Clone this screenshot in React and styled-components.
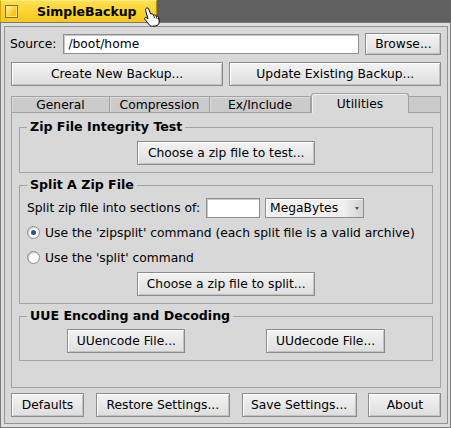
import styled, { createGlobalStyle } from 'styled-components'

const Global = createGlobalStyle`
  html, body {
    margin: 0;
    padding: 0;
    background: #606060;
  }
  * { box-sizing: border-box; }
`

const Desktop = styled.div`
  width: 451px;
  height: 428px;
  display: flex;
  flex-direction: column;
  font-family: "DejaVu Sans", "Liberation Sans", sans-serif;
  font-size: 12.3px;
  color: #000;
`

const TitleTab = styled.div`
  position: relative;
  width: 157px;
  height: 22px;
  flex: 0 0 22px;
  display: flex;
  align-items: center;
  background: linear-gradient(#ffe04e, #f7c71a);
  border-top: 1px solid #ffeb8a;
  border-right: 1px solid #b58d00;
  border-left: 1px solid #d9a800;
`

const CloseBox = styled.div`
  width: 13px;
  height: 13px;
  margin-left: 4px;
  border: 1px solid #8f7000;
  background: linear-gradient(135deg, #fff4b8, #f4c516 70%);
  box-shadow: inset -1px -1px 0 #ffe780;
`

const Title = styled.span`
  margin-left: 19px;
  font-weight: bold;
  font-size: 12.5px;
`

const Cursor = styled.svg`
  position: absolute;
  left: 142px;
  top: 6px;
`

const Frame = styled.div`
  flex: 1;
  display: flex;
  border: 1px solid #7a7a7a;
  padding: 3px;
  background: #dedede;
`

const Content = styled.div`
  flex: 1;
  display: flex;
  flex-direction: column;
  border: 1px solid #939393;
  background: #d8d8d8;
  padding: 6px 6px 6px 6px;
`

const Row = styled.div`
  display: flex;
  align-items: center;
  gap: ${p => p.$gap ?? 6}px;
  margin-bottom: ${p => p.$mb ?? 0}px;
  justify-content: ${p => p.$justify || 'flex-start'};
`

const Label = styled.span`
  white-space: nowrap;
`

const TextField = styled.div`
  height: 20px;
  width: ${p => p.$w}px;
  background: #fff;
  border: 1px solid #8e8e8e;
  box-shadow: inset 1px 1px 0 #c8c8c8;
  display: flex;
  align-items: center;
  padding-left: 4px;
`

const Button = styled.button`
  height: ${p => p.$h || 24}px;
  width: ${p => (p.$w ? `${p.$w}px` : 'auto')};
  flex: ${p => (p.$grow ? 1 : '0 0 auto')};
  padding: 0;
  font-family: inherit;
  font-size: 12.3px;
  color: #000;
  background: linear-gradient(#f3f3f3, #dedede);
  border: 1px solid #8c8c8c;
  border-radius: 0;
  box-shadow: inset 1px 1px 0 #ffffff, inset -1px -1px 0 #c2c2c2;
`

const Tabs = styled.div`
  flex: 1;
  display: flex;
  flex-direction: column;
  margin: 7px 0 5px;
`

const TabStrip = styled.div`
  display: flex;
  align-items: flex-end;
  height: 20px;
`

const Tab = styled.div`
  flex: 0 0 ${p => p.$w}px;
  height: ${p => (p.$active ? 20 : 17)}px;
  display: flex;
  align-items: center;
  justify-content: center;
  background: ${p => (p.$active ? '#d8d8d8' : '#cbcbcb')};
  border: 1px solid #a2a2a2;
  border-left: ${p => (p.$first || p.$active ? '1px solid #a2a2a2' : 'none')};
  border-bottom: ${p => (p.$active ? 'none' : '1px solid #a2a2a2')};
  border-radius: ${p => (p.$active ? '3px 3px 0 0' : '0')};
  box-shadow: ${p => (p.$active ? 'inset 1px 1px 0 #f0f0f0' : 'inset 1px 1px 0 #dcdcdc')};
  padding-top: ${p => (p.$active ? 0 : 1)}px;
`

const TabFiller = styled.div`
  flex: 1;
  height: 17px;
  background: #cbcbcb;
  border: 1px solid #a2a2a2;
  border-left: none;
`

const Panel = styled.div`
  flex: 1;
  display: flex;
  flex-direction: column;
  gap: 5px;
  border: 1px solid #a2a2a2;
  border-top: none;
  padding: 7px 7px;
`

const Group = styled.fieldset`
  margin: 0;
  border: 1px solid #a4a4a4;
  padding: ${p => p.$pt ?? 6}px 7px 7px;
  display: flex;
  flex-direction: column;
  gap: 4px;
  min-width: 0;
`

const Legend = styled.legend`
  font-weight: bold;
  font-size: 12.6px;
  line-height: 14px;
  padding: 0 3px;
`

const Select = styled.div`
  width: 99px;
  height: 20px;
  display: flex;
  align-items: center;
  justify-content: space-between;
  padding-left: 4px;
  border: 1px solid #8c8c8c;
  background: linear-gradient(90deg, #f0f0f0 80%, #d2d2d2);
  box-shadow: inset 1px 1px 0 #fff;
`

const Arrow = styled.span`
  width: 0;
  height: 0;
  margin-right: 4px;
  border-left: 2.5px solid transparent;
  border-right: 2.5px solid transparent;
  border-top: 3px solid #555;
`

const RadioRow = styled.label`
  display: flex;
  align-items: center;
  gap: 5px;
  height: 21px;
`

const RadioDot = styled.span`
  width: 13px;
  height: 13px;
  border-radius: 50%;
  border: 1px solid #8a8a8a;
  background: #fff;
  box-shadow: inset 1px 1px 1px #c8c8c8;
  display: flex;
  align-items: center;
  justify-content: center;
  &::after {
    content: '';
    width: 5px;
    height: 5px;
    border-radius: 50%;
    background: ${p => (p.$on ? '#24528c' : 'transparent')};
  }
`

const Center = styled.div`
  display: flex;
  justify-content: ${p => p.$justify || 'center'};
`

const tabs = [
  { name: 'General', w: 99 },
  { name: 'Compression', w: 100 },
  { name: 'Ex/Include', w: 101 },
  { name: 'Utilities', w: 98, active: true },
]

const App = () => {
  return (
    <Desktop>
      <Global />
      <TitleTab>
        <CloseBox />
        <Title>SimpleBackup</Title>
        <Cursor width="18" height="20" viewBox="0 0 18 20">
          <path
            d="M3 1.5 C3.8 0.6 5.2 0.8 5.6 1.8 L7.8 7.2 C8.5 6.4 9.8 6.6 10.2 7.6 L10.5 8.2 C11.3 7.5 12.5 7.8 12.9 8.8 L13.2 9.4 C14 8.9 15.2 9.3 15.5 10.4 L16.2 14 C16.6 16.8 15 18.8 12.2 19 L9.6 19.2 C7.8 19.3 6.6 18.4 5.6 17 L1.8 12.2 C1.2 11.3 2.2 10.1 3.3 10.6 L5 11.8 L2.6 3.4 C2.4 2.6 2.6 2 3 1.5 Z"
            fill="#fff"
            stroke="#000"
            strokeWidth="1"
            strokeLinejoin="round"
          />
          <path d="M10.5 8.2 L11.8 11.4 M13.2 9.4 L14.2 12" stroke="#000" strokeWidth="0.8" fill="none" />
        </Cursor>
      </TitleTab>
      <Frame>
        <Content>
          <Row $gap={7} $mb={7}>
            <Label style={{ marginLeft: -1 }}>Source:</Label>
            <TextField $w={296}>/boot/home</TextField>
            <Button $w={76} $h={22} style={{ marginLeft: -1 }}>Browse...</Button>
          </Row>
          <Row $gap={6}>
            <Button $grow>Create New Backup...</Button>
            <Button $grow>Update Existing Backup...</Button>
          </Row>
          <Tabs>
            <TabStrip>
              {tabs.map((t, i) => (
                <Tab key={t.name} $w={t.w} $active={t.active} $first={i === 0}>
                  {t.name}
                </Tab>
              ))}
              <TabFiller />
            </TabStrip>
            <Panel>
              <Group $pt={7}>
                <Legend>Zip File Integrity Test</Legend>
                <Center>
                  <Button $w={178}>Choose a zip file to test...</Button>
                </Center>
              </Group>
              <Group>
                <Legend>Split A Zip File</Legend>
                <Row $gap={5}>
                  <Label>Split zip file into sections of:</Label>
                  <TextField $w={54} style={{ marginLeft: 1 }} />
                  <Select>
                    MegaBytes
                    <Arrow />
                  </Select>
                </Row>
                <RadioRow>
                  <RadioDot $on />
                  Use the 'zipsplit' command (each split file is a valid archive)
                </RadioRow>
                <RadioRow>
                  <RadioDot />
                  Use the 'split' command
                </RadioRow>
                <Center>
                  <Button $w={178}>Choose a zip file to split...</Button>
                </Center>
              </Group>
              <Group>
                <Legend>UUE Encoding and Decoding</Legend>
                <Center $justify="space-around">
                  <Button $w={118}>UUencode File...</Button>
                  <Button $w={119}>UUdecode File...</Button>
                </Center>
              </Group>
            </Panel>
          </Tabs>
          <Row $justify="space-between">
            <Button $w={73}>Defaults</Button>
            <Button $w={134}>Restore Settings...</Button>
            <Button $w={115}>Save Settings...</Button>
            <Button $w={73}>About</Button>
          </Row>
        </Content>
      </Frame>
    </Desktop>
  )
}

export default App
